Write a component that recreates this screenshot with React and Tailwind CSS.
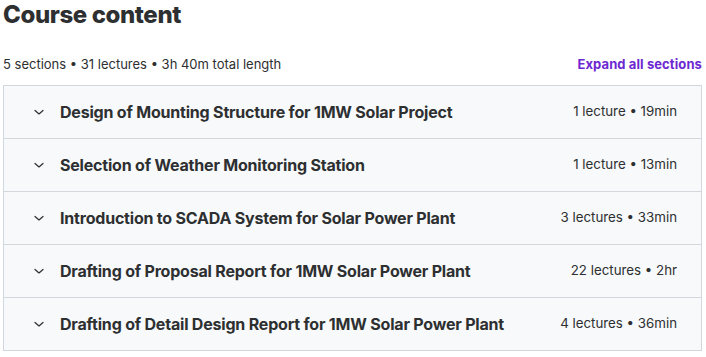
import React from "react";

const sections = [
  { title: "Design of Mounting Structure for 1MW Solar Project", meta: "1 lecture • 19min" },
  { title: "Selection of Weather Monitoring Station", meta: "1 lecture • 13min" },
  { title: "Introduction to SCADA System for Solar Power Plant", meta: "3 lectures • 33min" },
  { title: "Drafting of Proposal Report for 1MW Solar Power Plant", meta: "22 lectures • 2hr" },
  { title: "Drafting of Detail Design Report for 1MW Solar Power Plant", meta: "4 lectures • 36min" },
];

const Chevron = () => (
  <svg width="12" height="12" viewBox="0 0 12 12" fill="none" className="shrink-0">
    <path d="M2 4.5L6 8L10 4.5" stroke="#2d2f31" strokeWidth="1.2" strokeLinecap="round" strokeLinejoin="round" />
  </svg>
);

const App = () => {
  return (
    <div className="w-[706px] h-[357px] bg-white text-[#2d2f31] pl-[3px] pr-[4px]" style={{ fontFamily: "Inter, 'Liberation Sans', sans-serif" }}>
      <h2 className="text-[24px] leading-[30px] font-extrabold tracking-[-0.4px]">Course content</h2>
      <div className="flex items-center justify-between mt-[26px] h-[18px]">
        <span className="text-[13px]">5 sections • 31 lectures • 3h 40m total length</span>
        <button className="text-[13px] font-bold text-[#6d28d2] tracking-[0.1px]">Expand all sections</button>
      </div>
      <div className="mt-[11px] border border-[#d1d7dc]">
        {sections.map((s, i) => (
          <div
            key={i}
            className={`flex items-center bg-[#f7f9fa] pl-[29px] pr-[24px] ${i > 0 ? "h-[53px] border-t border-[#d1d7dc]" : "h-[52px]"}`}
          >
            <Chevron />
            <span className="ml-[15px] text-[16px] font-bold tracking-[-0.2px] flex-1">{s.title}</span>
            <span className="text-[13.3px]">{s.meta}</span>
          </div>
        ))}
      </div>
    </div>
  );
};

export default App;
